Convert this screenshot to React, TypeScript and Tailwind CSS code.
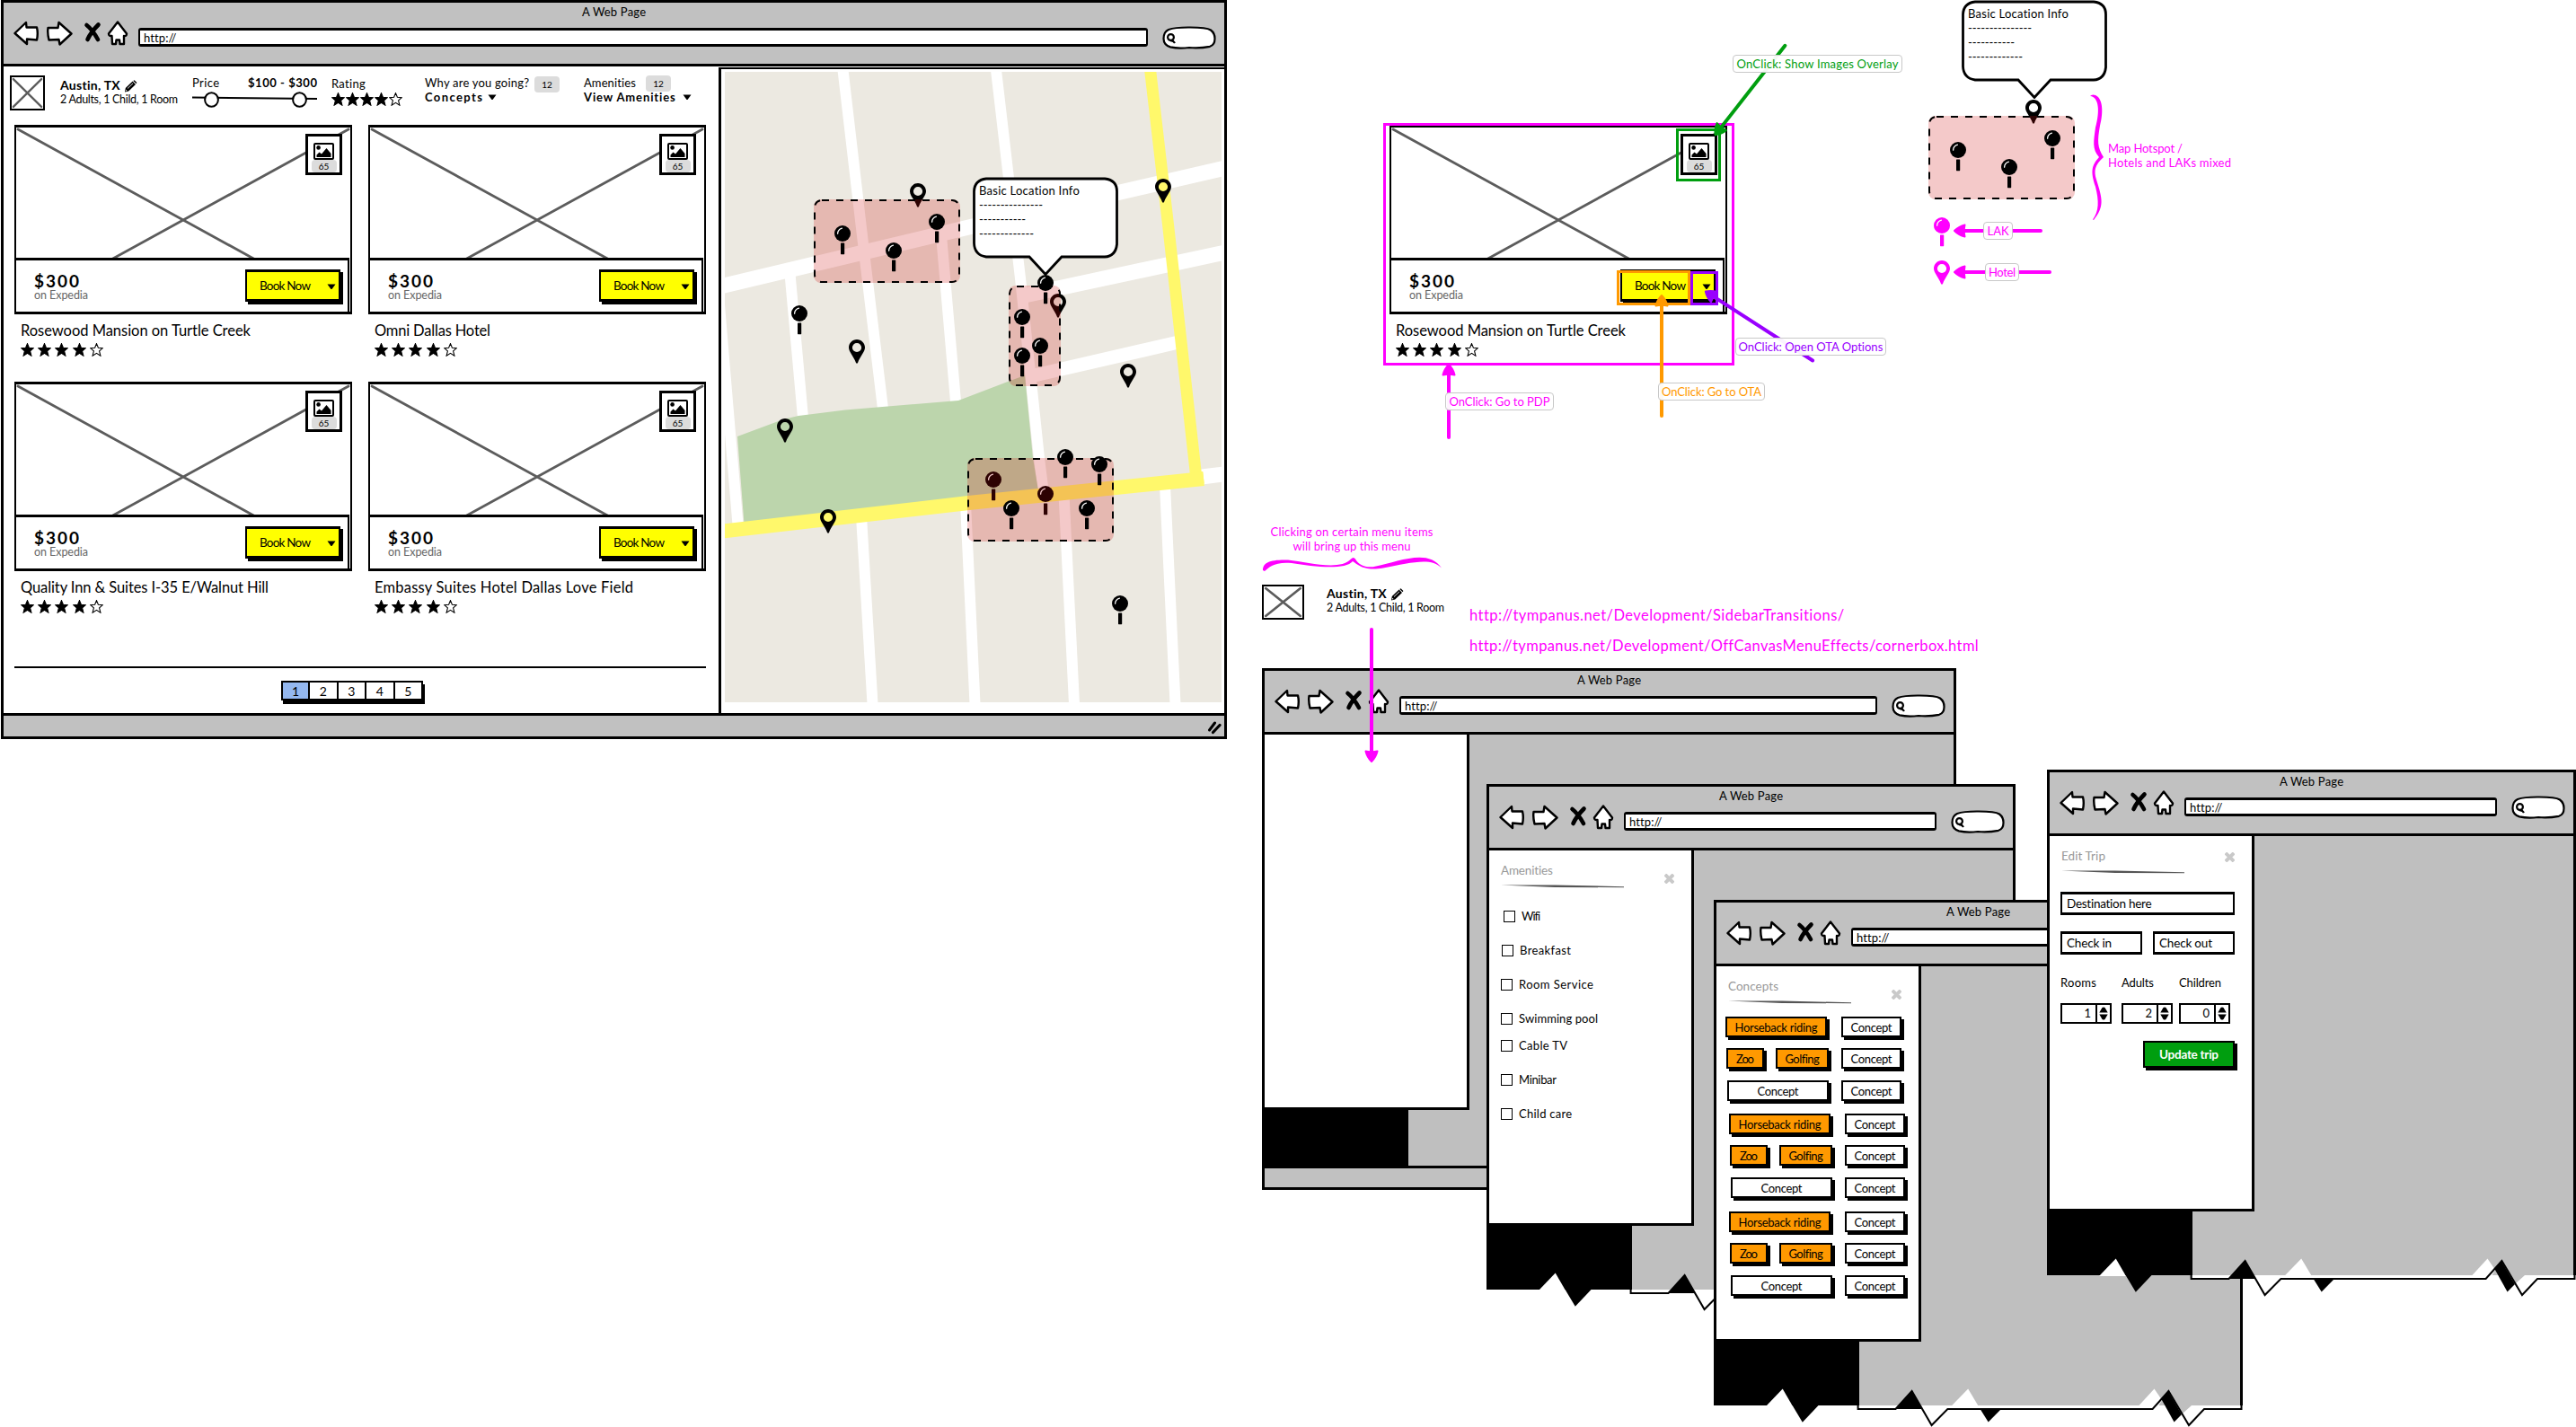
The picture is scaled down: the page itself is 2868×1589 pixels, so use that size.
import React, { useLayoutEffect, useRef, useState } from "react";

/* Text set to a given width: the tracking is derived from the measured natural width. */
function T({ w, className = "", children }: { w: number; className?: string; children: string }) {
  const ref = useRef<HTMLSpanElement>(null);
  const [sp, setSp] = useState(0);
  useLayoutEffect(() => {
    const el = ref.current;
    if (!el) return;
    const nat = el.getBoundingClientRect().width;
    setSp((w - nat) / Math.max(1, children.length - 1));
  }, [w, children]);
  return (
    <div className={`whitespace-nowrap leading-4 ${className}`} style={{ width: w }}>
      <span ref={ref} className="inline-block whitespace-pre" style={{ letterSpacing: sp }}>
        {children}
      </span>
    </div>
  );
}

/* ---------- small drawings ---------- */

function Star({ filled }: { filled: boolean }) {
  return (
    <svg className="h-[15px] w-[15px] shrink-0" viewBox="0 0 15 15">
      <path
        d="M7.5 0.6 L9.4 5.3 L14.3 5.7 L10.6 8.9 L11.9 14.2 L7.5 11.4 L3.1 14.2 L4.4 8.9 L0.7 5.7 L5.600 5.3 Z"
        fill={filled ? "#000" : "#fff"}
        stroke="#000"
        strokeWidth="1.1"
      />
    </svg>
  );
}

function Stars({ className }: { className: string }) {
  return (
    <div className={`flex ${className}`}>
      {[true, true, true, true, false].map((f, i) => (
        <Star key={i} filled={f} />
      ))}
    </div>
  );
}

function Caret() {
  return (
    <svg className="h-[6px] w-[10px] shrink-0" viewBox="0 0 10 6">
      <path d="M0.5 0.5 H9.5 L5.5 6 H4.5 Z" fill="#000" />
    </svg>
  );
}

function Pencil() {
  return (
    <svg className="h-[14px] w-[15px]" viewBox="0 0 15 14">
      <path d="M1 13.4 L1.8 9 L9.6 1.5 L13 4.9 L5.2 12.5 Z" fill="#000" />
      <path d="M10.3 0.9 L11.6 0.2 L14.4 3 L13.7 4.2 Z" fill="#000" />
      <path d="M4 9.5 L10 3.8" stroke="#fff" strokeWidth="0.9" />
      <path d="M1.9 12.4 L2.3 10.7 L3.6 12 Z" fill="#fff" />
    </svg>
  );
}

function CrossBox({ className }: { className: string }) {
  return (
    <div className={`border-2 border-black bg-white ${className}`}>
      <svg className="block h-full w-full" viewBox="0 0 40 35" preserveAspectRatio="none">
        <path d="M2 2 L38 33 M38 2 L2 33" stroke="#5c5c5c" strokeWidth="2.4" strokeLinecap="round" />
      </svg>
    </div>
  );
}

function NavIcons() {
  return (
    <svg className="h-[28px] w-[128px] shrink-0" viewBox="0 0 128 28" fill="#fff" stroke="#000" strokeWidth="2.4" strokeLinejoin="round">
      <path d="M1.5 14 L14 2 L14.5 7.5 L26 7.5 Q27.6 14 26 21.5 L15 20.5 L15 26 Z" />
      <path d="M38.5 8 L49.5 8 L50.5 2 L64.5 14.5 L51.5 26.5 L50.5 21 L39.5 21.5 Q37.6 14 38.5 8 Z" />
      <path d="M81.5 5 Q88 10 94 21 M94.5 4.500 Q86 13 82.5 21" strokeWidth="4.6" strokeLinecap="round" fill="none" />
      <path d="M116 1.500 L126 14.5 Q126 17.5 123 17 L123 26 L118.5 26 L118 21.5 L114.5 21.5 L114 26 L110 26 L109.5 17 Q106 17.5 106 14.5 Z" />
    </svg>
  );
}

function SearchPill() {
  return (
    <svg className="h-[26px] w-[60px] shrink-0" viewBox="0 0 60 26" fill="#fff" stroke="#000">
      <path d="M7 4 Q14 1.4 30 1.5 Q49 1.4 54 4.5 Q58.6 8 58.5 14 Q58.6 21 53 22.8 Q42 25 30 24 Q18 25.4 9 23.4 Q1.5 21 1.5 14 Q1.5 6.5 7 4 Z" strokeWidth="2.2" />
      <circle cx="9.500" cy="12.5" r="3.4" strokeWidth="2.2" />
      <path d="M9 16.500 Q12 15.5 14 19" strokeWidth="2.2" fill="none" />
    </svg>
  );
}

function LakPin({ color = "#000" }: { color?: string }) {
  return (
    <svg className="block h-[33px] w-[18px]" viewBox="0 0 18 33">
      <circle cx="9" cy="9" r="9" fill={color} />
      <path d="M3.6 9.2 Q3.8 4.6 8.4 3.2" stroke="#fff" strokeWidth="1.3" fill="none" strokeLinecap="round" />
      <rect x="7" y="19.4" width="4.2" height="12.8" rx="0.6" fill={color} />
    </svg>
  );
}

function HotelPin({ color = "#000" }: { color?: string }) {
  return (
    <svg className="block h-[27px] w-[18px]" viewBox="0 0 18 27">
      <path
        fillRule="evenodd"
        fill={color}
        d="M9 0 C4 0 0 4 0 9 C0 14 5.4 18.6 8 26 Q9 27.6 10 26 C12.6 18.6 18 14 18 9 C18 4 14 0 9 0 Z M9 3.9 A5.1 5.1 0 1 1 9 14.1 A5.1 5.1 0 1 1 9 3.9 Z"
      />
    </svg>
  );
}

function Hotspot({ w, h }: { w: number; h: number }) {
  return (
    <svg className="block" width={w} height={h}>
      <rect x="0" y="0" width={w} height={h} rx="8" fill="rgb(205,10,10)" fillOpacity="0.22" />
      <rect x="1" y="1" width={w - 2} height={h - 2} rx="8" fill="none" stroke="#000" strokeWidth="2" strokeDasharray="8 8" />
    </svg>
  );
}

function Bubble() {
  return (
    <div className="relative h-[110px] w-[162px]">
      <svg className="absolute inset-0" width="162" height="110" viewBox="0 0 162 110">
        <path
          d="M15 2 H147 Q160.5 3.500 160.5 16 V75 Q159 88.5 147 89 H99 L81 108.500 L63 89 H15 Q2 87 1.5 74 V16 Q2 3.500 15 2 Z"
          fill="#fff"
          stroke="#000"
          strokeWidth="2.8"
        />
      </svg>
      <div className="relative pl-[7px] pt-[7px]">
        <T w={112} className="text-[13px]">Basic Location Info</T>
        <T w={71} className="text-[13px]">---------------</T>
        <T w={52} className="text-[13px]">-----------</T>
        <T w={61} className="text-[13px]">-------------</T>
      </div>
    </div>
  );
}

function CloseX() {
  return (
    <svg className="h-[11px] w-[11px]" viewBox="0 0 11 11">
      <path d="M2.300 2.300 L8.700 8.700 M8.700 2.300 L2.300 8.700" stroke="#c9c9c9" strokeWidth="4" strokeLinecap="square" />
    </svg>
  );
}

/* ---------- browser chrome ---------- */

function Chrome() {
  return (
    <div className="flex h-[71px] w-full shrink-0 flex-col border-b-[3px] border-black bg-[#c1c1c1]">
      <div className="flex justify-center pt-[2px]">
        <T w={71} className="text-[13px]">A Web Page</T>
      </div>
      <div className="mt-[2px] flex pl-[11px] pr-[9px]">
        <NavIcons />
        <div className="ml-[11px] mt-[8px] h-[21px] flex-1 rounded-[3px] border-[2.5px] border-y-[3px] border-black bg-white pl-1">
          <T w={36} className="text-[13px]">http://</T>
        </div>
        <div className="ml-[16px] mt-[6px]">
          <SearchPill />
        </div>
      </div>
    </div>
  );
}

/* ---------- main page pieces ---------- */

function Trip() {
  return (
    <div className="w-[133px]">
      <div className="flex h-4 gap-[4px]">
        <T w={67} className="text-[14px] font-bold">Austin, TX</T>
        <div className="mt-[2px]">
          <Pencil />
        </div>
      </div>
      <T w={131} className="text-[12.5px]">2 Adults, 1 Child, 1 Room</T>
    </div>
  );
}

function Count({ className }: { className: string }) {
  return (
    <div className={`flex h-[18px] w-[28px] items-center justify-center rounded bg-[#dcdcdc] text-[10px] ${className}`}>12</div>
  );
}

function Filters() {
  return (
    <div className="flex h-[65px] items-start">
      <CrossBox className="ml-[7px] mt-[10px] h-[39px] w-[39px]" />
      <div className="ml-[17px] mt-[13px]">
        <Trip />
      </div>
      <div className="ml-[14px] mt-[10px] w-[139px]">
        <div className="flex justify-between">
          <T w={30} className="text-[13px]">Price</T>
          <T w={77} className="text-[13px] font-bold">$100 - $300</T>
        </div>
        <svg className="mt-px block h-[20px] w-[139px]" viewBox="0 0 139 20">
          <path d="M0 7.5 L139 9" stroke="#000" strokeWidth="2" />
          <ellipse cx="21.5" cy="10" rx="7.4" ry="7.8" fill="#fff" stroke="#000" strokeWidth="2" />
          <ellipse cx="119.5" cy="10" rx="7.4" ry="7.8" fill="#fff" stroke="#000" strokeWidth="2" />
        </svg>
      </div>
      <div className="ml-4 mt-[11px]">
        <T w={38} className="text-[13px]">Rating</T>
        <Stars className="mt-[2px] gap-px" />
      </div>
      <div className="ml-[25px] mt-[10px] w-[150px]">
        <div className="flex h-4 justify-between">
          <T w={116} className="text-[13px]">Why are you going?</T>
          <Count className="mt-px" />
        </div>
        <div className="flex items-center gap-[6px]">
          <T w={64} className="text-[13px] font-bold">Concepts</T>
          <Caret />
        </div>
      </div>
      <div className="ml-[27px] mt-[10px]">
        <div className="flex h-4 gap-[11px]">
          <T w={58} className="text-[13px]">Amenities</T>
          <Count className="" />
        </div>
        <div className="flex items-center gap-[8px]">
          <T w={102} className="text-[13px] font-bold">View Amenities</T>
          <Caret />
        </div>
      </div>
    </div>
  );
}

function Card({ name, w }: { name: string; w: number }) {
  return (
    <div className="h-[286px] w-[376px]">
      <div className="relative flex h-[211px] flex-col border-x-2 border-y-[3px] border-black bg-white">
        <svg className="block h-[145px] w-[372px]" viewBox="0 0 372 145">
          <path d="M2 2 L370 204 M370 2 L2 204" stroke="#5c5c5c" strokeWidth="2.8" strokeLinecap="round" />
        </svg>
        <div className="flex w-[371px] flex-1 items-start border-r-2 border-t-[3px] border-black bg-white">
          <div className="ml-[20px] mt-[13px]">
            <T w={50} className="text-[19px] font-bold leading-5">$300</T>
            <T w={60} className="-mt-[2px] text-[12.5px] text-[#666]">on Expedia</T>
          </div>
          <div className="ml-auto mr-[8px] mt-[10px] flex h-[36px] w-[106px] items-center border-x-2 border-y-[3px] border-black bg-[#ffff00] pl-[14px] shadow-[3px_3px_0_#000]">
            <T w={57} className="text-[13.5px]">Book Now</T>
            <div className="ml-[18px] pt-px">
              <Caret />
            </div>
          </div>
        </div>
        <div className="absolute left-[322px] top-[7px] flex h-[46px] w-[41px] flex-col items-center border-[3px] border-black bg-white pt-[7px]">
          <svg className="h-[19px] w-[23px] shrink-0" viewBox="0 0 23 19">
            <rect x="1" y="1" width="21" height="17" rx="1" fill="#fff" stroke="#000" strokeWidth="2" />
            <circle cx="5.6" cy="5.4" r="2.3" />
            <path d="M3.5 16 V13.5 L6.5 10.5 L9 12.5 L14.5 6 L19.5 12 V16 Z" />
          </svg>
          <div className="flex h-[14px] w-[28px] items-center justify-center rounded bg-[#dcdcdc] text-[10px]">65</div>
        </div>
      </div>
      <T w={w} className="ml-[7px] mt-[8px] text-[16.5px] leading-5">{name}</T>
      <Stars className="ml-[7px] mt-[4px] gap-[4.2px]" />
    </div>
  );
}

function Pagination() {
  return (
    <div className="ml-[309px] mt-[14px] flex h-[22px] w-[158px] border-2 border-black bg-white text-[14px] shadow-[2px_4px_0_#000]">
      <div className="flex w-[28px] items-center justify-center bg-[#94b8f0]">1</div>
      {["2", "3", "4", "5"].map((n) => (
        <div key={n} className="flex flex-1 items-center justify-center border-l-2 border-black">
          {n}
        </div>
      ))}
    </div>
  );
}

/* Map items are given in page coordinates; the map's own origin is (807, 80). */
const OX = 807;
const OY = 80;

function At({ x, y, children }: { x: number; y: number; children: React.ReactNode }) {
  return (
    <div className="absolute" style={{ left: x - OX, top: y - OY }}>
      {children}
    </div>
  );
}

const lowLaks = [[1106, 534], [1164, 550]];
const highLaks = [
  [937.7, 260], [994.7, 279], [1043, 247], [889.8, 349], [1163.8, 315], [1137.8, 353.3], [1157.7, 385.3],
  [1137.8, 396], [1186, 509], [1224, 517.3], [1126, 566], [1209.8, 566], [1247, 672],
];
const lowHotels = [[1022, 204], [1178, 327]];
const highHotels = [[1294.7, 199], [953.7, 378], [1255.7, 405], [873.8, 466], [922, 567]];
const spots = [[905.5, 222, 163, 93], [1122.5, 318, 58, 112], [1077, 510, 163, 93]];

function CityMap() {
  return (
    <div className="relative ml-[4px] mt-[3px] h-[702px] w-[553px] overflow-hidden">
      <svg className="absolute inset-0" width="553" height="702" viewBox="807 80 553 702">
        <rect x="807" y="80" width="553" height="702" fill="#ece9e1" />
        <g stroke="#fff" strokeWidth="12" fill="none">
          <path d="M938.5 78 L964 297 L983 455" />
          <path d="M1109 78 L1136 310 L1157 510 L1162 550" />
          <path d="M879.5 305 L894 465" />
          <path d="M1048 262 L1064 447" />
          <path d="M801 340 L822 590" />
          <path d="M959 575 L971.5 784" />
          <path d="M1075 560 L1085.5 784" />
          <path d="M1184.5 550 L1196 784" />
          <path d="M1297 540 L1308.5 784" />
          <path d="M1330 532 L1362 528" strokeWidth="17" />
          <path d="M800 319.5 L1078.5 253 L1364 187" strokeWidth="17" />
          <path d="M1136 330 L1364 281" strokeWidth="17" />
          <path d="M1143 420 L1312 381" strokeWidth="15" />
        </g>
        <path d="M821 486 L872 467 L889 463 L941 456.5 L1067 446 L1122 425 L1141 418 L1150 510 L1157 552 L829 590 Z" fill="#bcd5ac" />
        <path d="M1280.6 78 L1300.5 250 L1332 533 L1340 532 M1333.5 541 L1331 525" stroke="#fff86b" strokeWidth="13" fill="none" />
        <path d="M800 592 L1078.5 560 L1340 533" stroke="#fff86b" strokeWidth="16" fill="none" />
      </svg>
      {lowLaks.map(([x, y], i) => (
        <At key={i} x={x - 9} y={y - 9}><LakPin /></At>
      ))}
      {lowHotels.map(([x, y], i) => (
        <At key={i} x={x - 9} y={y}><HotelPin /></At>
      ))}
      {spots.map(([x, y, w, h], i) => (
        <At key={i} x={x} y={y}><Hotspot w={w} h={h} /></At>
      ))}
      <At x={1083} y={197}><Bubble /></At>
      {highLaks.map(([x, y], i) => (
        <At key={i} x={x - 9} y={y - 9}><LakPin /></At>
      ))}
      {highHotels.map(([x, y], i) => (
        <At key={i} x={x - 9} y={y}><HotelPin /></At>
      ))}
    </div>
  );
}

function MainWindow() {
  return (
    <div className="absolute left-px top-0 flex h-[823px] w-[1365px] flex-col border-[3px] border-black bg-white">
      <Chrome />
      <div className="flex h-[720px] shrink-0">
        <div className="w-[796px]">
          <Filters />
          <div className="ml-3 grid w-[770px] grid-cols-2 gap-x-[18px]">
            <Card name="Rosewood Mansion on Turtle Creek" w={256} />
            <Card name="Omni Dallas Hotel" w={129} />
            <Card name="Quality Inn & Suites I-35 E/Walnut Hill" w={276} />
            <Card name="Embassy Suites Hotel Dallas Love Field" w={288} />
          </div>
          <div className="ml-3 mt-[31px] h-[2px] w-[770px] bg-black" />
          <Pagination />
        </div>
        <div className="mt-px flex-1 border-l-[3px] border-t-2 border-black">
          <CityMap />
        </div>
      </div>
      <div className="flex flex-1 items-start justify-end border-t-[3px] border-black bg-[#c1c1c1] pr-[3px] pt-[6px]">
        <svg className="h-[15px] w-[16px]" viewBox="0 0 16 15" stroke="#000" strokeLinecap="round">
          <path d="M2.5 10 L8.5 2" strokeWidth="3" />
          <path d="M6.5 12.5 L14 4.5" strokeWidth="3.2" />
        </svg>
      </div>
    </div>
  );
}

/* ---------- off-canvas windows ---------- */

function TornWindow({ className, children }: { className: string; children: React.ReactNode }) {
  return (
    <div className={`absolute h-[590px] w-[589px] ${className}`}>
      <div className="flex h-[563px] flex-col border-x-[3px] border-t-[3px] border-black bg-[#bfbfbf]">
        <Chrome />
        <div className="h-[418px] w-[228px] shrink-0 border-b-[3px] border-r-[3px] border-black bg-white">{children}</div>
        <div className="w-[159px] flex-1 bg-black" />
      </div>
      <svg className="absolute left-0 top-[539px]" width="589" height="50" viewBox="-1 539 589 50">
        <path d="M161 563 H586 V567 H161 Z" fill="#fff" />
        <path d="M57 564 L75.7 544.5 L87 564 Z" fill="#fff" />
        <path d="M86 562 L97.8 581.7 L116 562.5 Z" fill="#000" />
        <path d="M202 567 L219.6 547 L231 567 Z" fill="#000" />
        <path d="M229 563 L241.6 585 L261 566 L263 563 Z" fill="#fff" />
        <path d="M263.7 563.5 L282.2 544.5 L293.5 563.5 Z" fill="#fff" />
        <path d="M295.6 567 H319 L304.7 581.5 Z" fill="#000" />
        <path d="M472 563.5 L489.5 544.5 L498 557 L494 564 Z" fill="#fff" />
        <path d="M505.4 547 L497.4 556 L511.6 581.5 L520 573 Z" fill="#000" />
        <path d="M506 549 L520 573 L531 563 Z" fill="#bfbfbf" />
        <path d="M529 567 L545 567 V564 H531 L520 573 L528 584 Z" fill="#fff" />
        <path
          d="M159.6 562 V567 H201.5 L219.6 547 L241.6 585 L259.4 567 H487.6 L505.4 547 L528 585 L545 567 H586.5 V560"
          fill="none"
          stroke="#000"
          strokeWidth="2"
        />
      </svg>
    </div>
  );
}

function PanelHead({ title, w, closeTop }: { title: string; w: number; closeTop: string }) {
  return (
    <div className="flex h-[43px] pl-[13px]">
      <div className="w-[182px] pt-[14px]">
        <T w={w} className="text-[13.5px] text-[#999]">{title}</T>
        <svg className="mt-[8px] block h-[4px] w-[137px]" viewBox="0 0 137 4">
          <path d="M0 0.6 L60 0.6 L137 2.2 V3.2 L60 3 Z" fill="#555" />
        </svg>
      </div>
      <div className={closeTop}>
        <CloseX />
      </div>
    </div>
  );
}

function Check({ label, w, className }: { label: string; w: number; className: string }) {
  return (
    <div className={`flex h-4 items-center gap-[7px] ${className}`}>
      <div className="h-[13px] w-[13px] border border-black bg-white" />
      <T w={w} className="text-[13px]">{label}</T>
    </div>
  );
}

function Chip({ label, tw, className }: { label: string; tw: number; className: string }) {
  return (
    <div className={`flex h-[23px] shrink-0 items-center justify-center border-2 border-black shadow-[3px_3px_0_#000] ${className}`}>
      <T w={tw} className="text-[13px]">{label}</T>
    </div>
  );
}

function ChipGroup({ className, gap1, gap2 }: { className: string; gap1: string; gap2: string }) {
  return (
    <div className={className}>
      <div className="flex">
        <Chip label="Horseback riding" tw={92} className="w-[113px] bg-[#ff9900]" />
        <Chip label="Concept" tw={46} className="ml-[16px] w-[67px] bg-white" />
      </div>
      <div className={`ml-px flex ${gap1}`}>
        <Chip label="Zoo" tw={20} className="w-[42px] bg-[#ff9900]" />
        <Chip label="Golfing" tw={38} className="ml-[13px] w-[59px] bg-[#ff9900]" />
        <Chip label="Concept" tw={46} className="ml-[14px] w-[67px] bg-white" />
      </div>
      <div className={`ml-[2px] flex ${gap2}`}>
        <Chip label="Concept" tw={46} className="w-[113px] bg-white" />
        <Chip label="Concept" tw={46} className="ml-[14px] w-[67px] bg-white" />
      </div>
    </div>
  );
}

function Field({ label, tw, className }: { label: string; tw: number; className: string }) {
  return (
    <div className={`flex h-[26px] items-center border-x-2 border-y-[3px] border-black bg-white pb-px pl-[5px] ${className}`}>
      <T w={tw} className="text-[13.5px]">{label}</T>
    </div>
  );
}

function Spinner({ label, tw, value, className }: { label: string; tw: number; value: string; className: string }) {
  return (
    <div className={className}>
      <T w={tw} className="text-[13px]">{label}</T>
      <div className="mt-[15px] flex h-[23px] w-[57px] border-2 border-black bg-white">
        <div className="flex-1 pr-[5px] text-right text-[13px] leading-[18px]">{value}</div>
        <div className="flex w-[16px] items-center justify-center border-l-2 border-black">
          <svg className="h-[15px] w-[10px]" viewBox="0 0 10 15">
            <path d="M0.3 6.5 L3.5 1 Q5 0 6.5 1 L9.7 6.5 Z M0.3 8.5 L3.5 14 Q5 15 6.5 14 L9.7 8.5 Z" />
          </svg>
        </div>
      </div>
    </div>
  );
}

/* ---------- annotations ---------- */

function Arrow({ x1, y1, x2, y2, color }: { x1: number; y1: number; x2: number; y2: number; color: string }) {
  const a = (Math.atan2(y2 - y1, x2 - x1) * 180) / Math.PI;
  const len = Math.hypot(x2 - x1, y2 - y1);
  return (
    <g transform={`translate(${x1} ${y1}) rotate(${a})`} stroke={color} fill={color} strokeLinejoin="round" strokeLinecap="round">
      <path d={`M1 0 H${len - 10}`} strokeWidth="4" />
      <path d={`M${len - 1} 0 Q${len - 6} -5 ${len - 12.5} -6.5 Q${len - 11} 0 ${len - 12.5} 6.5 Q${len - 6} 5 ${len - 1} 0 Z`} strokeWidth="2" />
    </g>
  );
}

function Tag({ text, w, className }: { text: string; w: number; className: string }) {
  return (
    <div className={`absolute flex h-[20px] items-center justify-center rounded-[4px] border border-[#c8c8c8] bg-white/95 ${className}`}>
      <T w={w} className="text-[13px]">{text}</T>
    </div>
  );
}

export default function App() {
  return (
    <div className="relative h-[1589px] w-[2868px] overflow-hidden bg-white font-[Lato,sans-serif] text-black">
      <MainWindow />

      {/* annotated card */}
      <div className="absolute left-[1547px] top-[139px]">
        <Card name="Rosewood Mansion on Turtle Creek" w={256} />
      </div>
      <div className="absolute left-[1540px] top-[137px] h-[270px] w-[391px] border-[3px] border-[#ff00ff]" />
      <div className="absolute left-[1866px] top-[143px] h-[59px] w-[50px] border-[3px] border-[#009e0f]" />
      <div className="absolute left-[1800px] top-[301px] h-[39px] w-[82px] border-[3px] border-[#ff9900]" />
      <div className="absolute left-[1882px] top-[302px] h-[38px] w-[31px] border-[3px] border-[#9900ff]" />

      {/* map legend */}
      <div className="absolute left-[2184px] top-0">
        <Bubble />
      </div>
      <div className="absolute left-[2255px] top-[111px]">
        <HotelPin />
      </div>
      <div className="absolute left-[2147px] top-[129px]">
        <Hotspot w={163} h={93} />
      </div>
      <div className="absolute left-[2171px] top-[158px]"><LakPin /></div>
      <div className="absolute left-[2228px] top-[177px]"><LakPin /></div>
      <div className="absolute left-[2276px] top-[145px]"><LakPin /></div>
      <div className="absolute left-[2153px] top-[242px]"><LakPin color="#ff00ff" /></div>
      <div className="absolute left-[2153px] top-[290px]"><HotelPin color="#ff00ff" /></div>
      <div className="absolute left-[2347px] top-[157px] text-[#ff00ff]">
        <T w={83} className="text-[13px]">Map Hotspot /</T>
        <T w={137} className="text-[13px]">Hotels and LAKs mixed</T>
      </div>

      {/* menu notes */}
      <div className="absolute left-[1405px] top-[584px] flex w-[200px] flex-col items-center text-[#ff00ff]">
        <T w={181} className="text-[13px]">Clicking on certain menu items</T>
        <T w={131} className="text-[13px]">will bring up this menu</T>
      </div>
      <div className="absolute left-[1405px] top-[651px] flex items-start gap-[25px]">
        <CrossBox className="h-[39px] w-[47px]" />
        <div className="mt-[2px]">
          <Trip />
        </div>
      </div>
      <div className="absolute left-[1636px] top-[675px] flex flex-col gap-[14px] text-[#ff00ff]">
        <T w={417} className="text-[16.5px] leading-5">http://tympanus.net/Development/SidebarTransitions/</T>
        <T w={565} className="text-[16.5px] leading-5">http://tympanus.net/Development/OffCanvasMenuEffects/cornerbox.html</T>
      </div>

      {/* empty menu window */}
      <div className="absolute left-[1405px] top-[744px] flex h-[581px] w-[773px] flex-col border-[3px] border-black bg-[#bfbfbf]">
        <Chrome />
        <div className="h-[418px] w-[228px] shrink-0 border-b-[3px] border-r-[3px] border-black bg-white" />
        <div className="h-[62px] w-[160px] shrink-0 bg-black" />
        <div className="flex-1 border-t-[3px] border-black bg-[#c1c1c1]" />
      </div>

      <TornWindow className="left-[1655px] top-[873px]">
        <PanelHead title="Amenities" w={58} closeTop="pt-[26px]" />
        <Check label="Wifi" w={21} className="ml-[16px] mt-[22px]" />
        <Check label="Breakfast" w={57} className="ml-[14px] mt-[22px]" />
        <Check label="Room Service" w={83} className="ml-[13px] mt-[22px]" />
        <Check label="Swimming pool" w={88} className="ml-[13px] mt-[22px]" />
        <Check label="Cable TV" w={54} className="ml-[13px] mt-[14px]" />
        <Check label="Minibar" w={42} className="ml-[13px] mt-[22px]" />
        <Check label="Child care" w={59} className="ml-[13px] mt-[22px]" />
      </TornWindow>

      <TornWindow className="left-[1908px] top-[1002px]">
        <PanelHead title="Concepts" w={56} closeTop="pt-[26px]" />
        <ChipGroup className="ml-[10px] mt-[13px]" gap1="mt-[12px]" gap2="mt-[13px]" />
        <ChipGroup className="ml-[14px] mt-[14px]" gap1="mt-[12px]" gap2="mt-[13px]" />
        <ChipGroup className="ml-[14px] mt-[15px]" gap1="mt-[12px]" gap2="mt-[13px]" />
      </TornWindow>

      <TornWindow className="left-[2279px] top-[857px]">
        <PanelHead title="Edit Trip" w={49} closeTop="pt-[18px]" />
        <Field label="Destination here" tw={95} className="ml-[12px] mt-[19px] w-[194px]" />
        <div className="ml-[12px] mt-[18px] flex gap-[12px]">
          <Field label="Check in" tw={50} className="w-[91px]" />
          <Field label="Check out" tw={59} className="w-[91px]" />
        </div>
        <div className="ml-[12px] mt-[23px] flex">
          <Spinner label="Rooms" tw={40} value="1" className="w-[68px]" />
          <Spinner label="Adults" tw={36} value="2" className="w-[64px]" />
          <Spinner label="Children" tw={47} value="0" className="w-[64px]" />
        </div>
        <div className="ml-[104px] mt-[19px] flex h-[30px] w-[102px] items-center justify-center border-2 border-black bg-[#009e0f] text-white shadow-[3px_3px_0_#000]">
          <T w={66} className="text-[13.5px] font-bold">Update trip</T>
        </div>
      </TornWindow>

      {/* arrows and braces */}
      <svg className="pointer-events-none absolute inset-0" width="2868" height="1589" viewBox="0 0 2868 1589">
        <Arrow x1={1988} y1={50} x2={1909} y2={151} color="#009e0f" />
        <Arrow x1={1850} y1={464} x2={1850} y2={328} color="#ff9900" />
        <Arrow x1={2019} y1={402} x2={1898} y2={324} color="#9900ff" />
        <Arrow x1={1613} y1={488} x2={1613} y2={405} color="#ff00ff" />
        <Arrow x1={2273} y1={257} x2={2175} y2={257} color="#ff00ff" />
        <Arrow x1={2283} y1={303} x2={2175} y2={303} color="#ff00ff" />
        <Arrow x1={1527} y1={700} x2={1527} y2={849} color="#ff00ff" />
        <path
          d="M2327 107 Q2329 104.5 2333 106 C2342 110 2341.5 127 2338 140 C2335 157 2335 164 2342 175 C2332 184 2331 190 2334 200 C2341 222 2343 230 2331 245 L2330 244.5 C2337 235 2337 224 2333 208 C2327 190 2329 184 2337 175 C2329 166 2331 157 2333 142 C2338 124 2337 108 2327 107 Z"
          fill="#ff00ff"
        />
        <path
          d="M1406 635 C1406 626 1414 623 1434 623.5 C1456 626 1492 636 1504 622.5 Q1507 619.5 1509 622.5 C1513 630 1522 633 1532 630.5 C1556 626 1590 610 1605 632.5 C1593 620 1570 627 1540 632.5 C1520 636 1513 630 1506 625 C1498 635 1462 631 1438 627 C1420 625 1412 632 1408 636 Z"
          fill="#ff00ff"
        />
      </svg>
      <Tag text="OnClick: Show Images Overlay" w={180} className="left-[1929px] top-[61px] w-[189px] text-[#009e0f]" />
      <Tag text="OnClick: Open OTA Options" w={161} className="left-[1932px] top-[376px] w-[168px] text-[#9900ff]" />
      <Tag text="OnClick: Go to OTA" w={111} className="left-[1846px] top-[426px] w-[119px] text-[#ff9900]" />
      <Tag text="OnClick: Go to PDP" w={112} className="left-[1609px] top-[437px] w-[121px] text-[#ff00ff]" />
      <Tag text="LAK" w={24} className="left-[2208px] top-[247px] w-[33px] text-[#ff00ff]" />
      <Tag text="Hotel" w={30} className="left-[2210px] top-[293px] w-[38px] text-[#ff00ff]" />
    </div>
  );
}
